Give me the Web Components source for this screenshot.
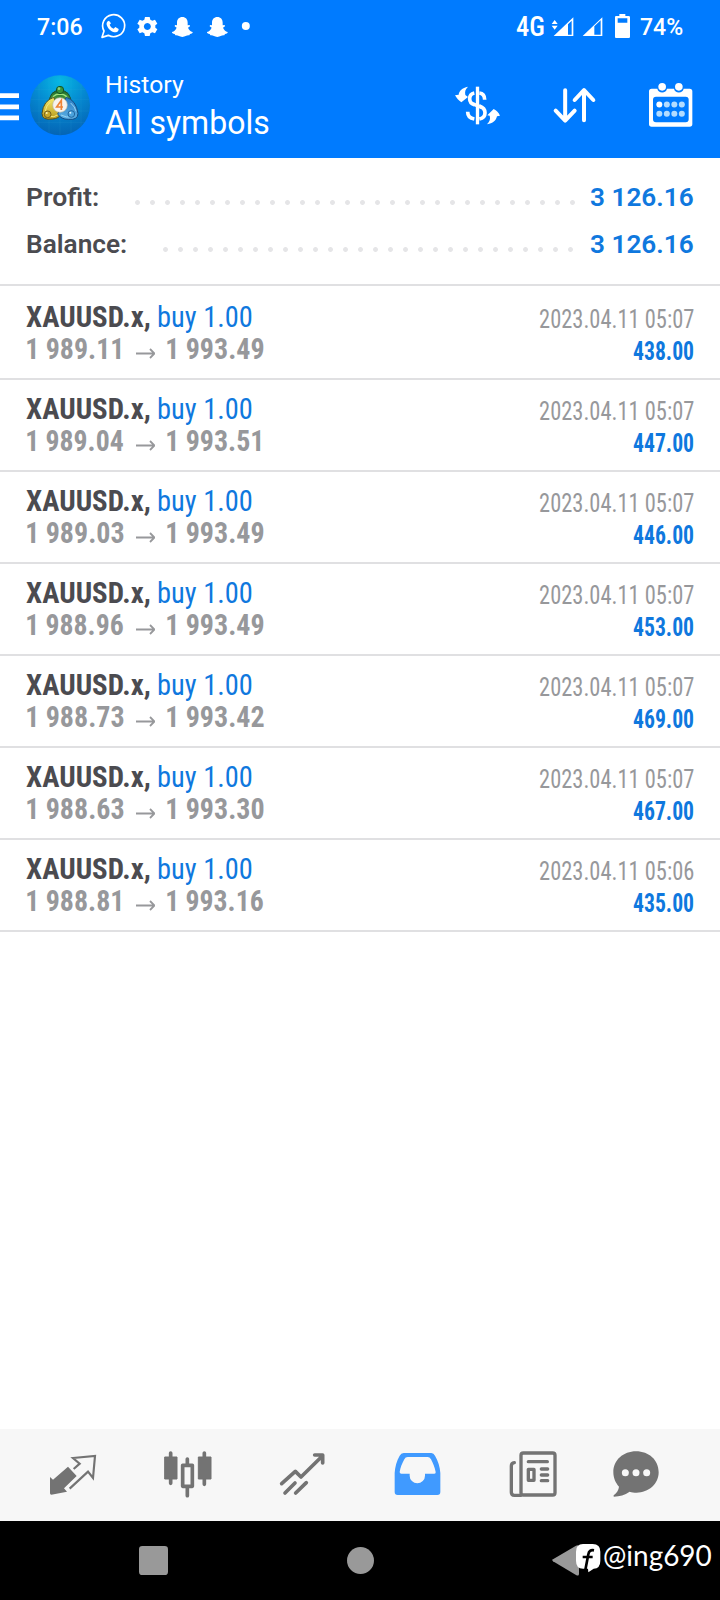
<!DOCTYPE html>
<html lang="en">
<head>
<meta charset="utf-8">
<title>History</title>
<style>
body { margin: 0; background: #fff; font-family: Roboto, "Liberation Sans", sans-serif; }
</style>
</head>
<body>
<history-app></history-app>
<script>
const define = (name, html, init) => {
  const tpl = document.createElement('template');
  tpl.innerHTML = html;
  customElements.define(name, class extends HTMLElement {
    connectedCallback() {
      if (this.shadowRoot) return;
      this.attachShadow({ mode: 'open' }).append(tpl.content.cloneNode(true));
      if (init) init.call(this, this.shadowRoot);
    }
  });
};

/* A run of text whose visible glyphs fill exactly `w` pixels. */
const ctx = document.createElement('canvas').getContext('2d');
define('fit-text', `
<style>
:host { display: block; white-space: nowrap; flex: none; }
span { display: block; width: max-content; transform-origin: 0 50%; line-height: inherit; }
</style><span></span>`, function (root) {
  const span = root.querySelector('span');
  const w = +this.getAttribute('w');
  span.textContent = this.getAttribute('text');
  const cs = getComputedStyle(this);
  ctx.font = cs.fontWeight + ' ' + cs.fontSize + ' ' + cs.fontFamily;
  ctx.fontStretch = parseFloat(cs.fontStretch) < 100 ? 'condensed' : 'normal';
  const m = ctx.measureText(span.textContent);
  const k = w / (m.actualBoundingBoxRight + m.actualBoundingBoxLeft);
  this.style.width = w + 'px';
  span.style.transform = 'translateX(' + m.actualBoundingBoxLeft * k + 'px) scaleX(' + k + ')';
});

define('status-bar', `
<style>
:host { display: flex; height: 54px; line-height: 54px; color: #fff; font-size: 24px; font-weight: 500; padding: 0 38px 0 36.500px; }
svg { display: block; height: 54px; flex: none; }
.net { font-size: 28px; font-stretch: 75%; font-weight: 500; margin-right: 1px; }
.left { margin-left: 8.500px; margin-right: auto; }
</style>
<fit-text w="45" text="7:06"></fit-text>
<svg class="left" width="165" viewBox="270 0 495 162" fill="#fff">
  <path d="M306 112l6-19a33 33 0 1 1 13 13z" fill="none" stroke="#fff" stroke-width="5" stroke-linejoin="round"/>
  <path d="M327 62c-6 1-8 7-7 12 4 13 14 22 27 23 6 0 9-5 9-10l-10-6-5 5c-6-2-10-7-12-12l4-4z"/>
  <path fill-rule="evenodd" d="M435 51h14l2 8 6 3 8-3 7 12-6 5v7l6 5-7 12-8-3-6 3-2 8h-14l-2-8-6-3-8 3-7-12 6-5v-7l-6-5 7-12 8 3 6-3zM442 69a10.500 10.500 0 1 0 .1 0z"/>
  <g id="g"><path id="ghost" d="M547 51c10 0 16 7 16 17v8l6-1 1 4-6 4c3 7 7 11 14 13 1 4-3 5-8 6l-2 4c-9-1-11 4-21 5-10-1-12-6-21-5l-2-4c-5-1-9-2-8-6 7-2 11-6 14-13l-6-4 1-4 6 1v-8c0-10 6-17 16-17z"/></g>
  <use href="#ghost" x="105"/>
  <circle cx="737.500" cy="78" r="12"/>
</svg>
<fit-text class="net" w="27.500" text="4G"></fit-text>
<svg width="95" viewBox="312 0 285 162" fill="#fff">
  <path d="M341 60l9 12h-18zM341 89l9-12h-18z"/>
  <path fill-rule="evenodd" d="M338 108l59-56v56zM381 73v31h11v-42z"/>
  <path fill-rule="evenodd" d="M425 108l59-56v56zM460 79v25h19v-43z"/>
  <path fill-rule="evenodd" d="M535 42h18v6h10q4 0 4 4v59q0 3-4 3h-38q-3 0-3-3v-59q0-4 3-4h10zM530 55v13h29v-13z"/>
</svg>
<fit-text w="42.500" text="74%"></fit-text>`);

define('app-header', `
<style>
:host { display: flex; height: 104px; color: #fff; }
svg { display: block; height: 104px; flex: none; }
.titles { width: 340px; flex: none; padding: 16px 0 0 6px; box-sizing: border-box; }
.small { font-size: 24.5px; line-height: 30px; margin-left: .5px; }
.big { font-size: 33.5px; line-height: 45px; margin-left: -1px; }
</style>
<svg width="100" viewBox="0 162 300 312" fill="none">
  <defs>
    <radialGradient id="bg" cx=".5" cy=".1" r=".9"><stop offset="0" stop-color="#06b8e4"/><stop offset=".5" stop-color="#0588d0"/><stop offset="1" stop-color="#0464b4"/></radialGradient>
    <linearGradient id="gr" x1="0" y1="0" x2="0" y2="1"><stop offset="0" stop-color="#1d6b2b"/><stop offset="1" stop-color="#70c04c"/></linearGradient>
    <linearGradient id="ye" x1="0" y1="0" x2="0" y2="1"><stop offset="0" stop-color="#f6ea6a"/><stop offset="1" stop-color="#b99a1c"/></linearGradient>
    <linearGradient id="bl" x1="0" y1="0" x2="0" y2="1"><stop offset="0" stop-color="#2a7cc4"/><stop offset="1" stop-color="#5cb0e4"/></linearGradient>
  </defs>
  <path d="M0 287h57M0 320.500h57M0 353.500h57" stroke="#fff" stroke-width="14"/>
  <circle cx="180" cy="316" r="90" fill="url(#bg)"/>
  <path d="M117 251v130M147 233v166M180 226v180M213 233v166M243 251v130M104 268h152M93 298h174M93 333h174M104 367h152" stroke="#48b6e4" stroke-opacity=".22" stroke-width="1.500"/>
  <path d="M147 313q0-42 33-42t34 42l-16 9h-36z" fill="url(#gr)" stroke="#1b5130" stroke-width="3"/>
  <path d="M156 305q-1-23 24-23 24 1 24 23" stroke="#9ce27d" stroke-width="4"/>
  <path d="M161 292q-31 10-35 48 0 22 31 17 20-1 26-15z" fill="url(#ye)" stroke="#55511c" stroke-width="3"/>
  <path d="M151 306q-13 11-15 27m10 16q16 5 30-6" stroke="#f2e67c" stroke-width="3"/>
  <path d="M199 292q29 8 35 48 0 21-29 18-22 0-32-16z" fill="url(#bl)" stroke="#154c83" stroke-width="3"/>
  <path d="M212 309q14 12 16 25m-45 11q16 9 33 5" stroke="#98d3f2" stroke-width="3"/>
  <circle cx="180" cy="270" r="11" fill="#38943d" stroke="#155526" stroke-width="3"/>
  <circle cx="143" cy="343" r="10" fill="#c9aa2a" stroke="#63501a" stroke-width="2.500"/>
  <circle cx="214" cy="342" r="10" fill="#4ba3dd" stroke="#1c5a91" stroke-width="2.500"/>
  <circle cx="177" cy="266" r="4" fill="#8ed27a"/>
  <circle cx="140" cy="339" r="3" fill="#fff3b0"/><circle cx="211" cy="338" r="3" fill="#d8f1ff"/>
  <circle cx="180" cy="315" r="22" fill="#f7f3ee" stroke="#b7b9a6" stroke-width="2"/>
  <path d="M184 330v-29l-14 20h19" stroke="#ee8336" stroke-width="5"/>
</svg>
<div class="titles">
  <fit-text class="small" w="77" text="History"></fit-text>
  <fit-text class="big" w="163.500" text="All symbols"></fit-text>
</div>
<svg width="80" viewBox="0 162 240 312" fill="none">
  <path d="M112.500 260v113" stroke="#fff" stroke-width="10"/>
  <path d="M134 299c0-12-7-19-16-20M103 279c-10 2-14 9-14 17 0 11 5 15 14 18M118 318c11 4 17 10 17 20 0 11-7 17-17 19M83 335c0 13 8 20 20 22" stroke="#fff" stroke-width="11"/>
  <path d="M100 307l24 9v11l-24-9z" fill="#fff"/>
  <path d="M45 286l11-2c2-12 10-20 28-24-8 8-10 14-8 25l8 6-20 16c-8-5-14-12-19-21zM180 347l-9 2c-3 13-12 21-30 24 8-9 11-15 8-26l-7-1 19-19c9 5 15 11 19 20z" fill="#fff"/>
</svg>
<svg width="90" viewBox="240 162 270 312" fill="none" stroke="#fff" stroke-width="12" stroke-linecap="round" stroke-linejoin="round">
  <path d="M375.500 271v90M347 332l28.500 30 28.500-30M432 361v-90M404 300l28-30 28 30"/>
</svg>
<svg width="110" viewBox="510 162 330 312" fill="#fff">
  <path fill-rule="evenodd" d="M635 266h17a15 15 0 0 0 29 0h21a15 15 0 0 0 29 0h18q8 0 8 8v99q0 7-8 7h-114q-8 0-8-7v-99q0-8 8-8zM648 290q-9 0-9 9v59q0 9 9 9h89q9 0 9-9v-59q0-9-9-9z"/>
  <circle cx="666.500" cy="260.500" r="11.500"/><circle cx="716.500" cy="260.500" r="11.500"/>
  <circle cx="658" cy="313.500" r="9"/>
  <g fill="#b3dcff"><circle cx="680.500" cy="313.500" r="9"/><circle cx="703" cy="313.500" r="9"/><circle cx="725.500" cy="313.500" r="9"/><circle cx="658" cy="341.500" r="9"/><circle cx="680.500" cy="341.500" r="9"/><circle cx="703" cy="341.500" r="9"/><circle cx="725.500" cy="341.500" r="9"/></g>
</svg>`);

define('summary-row', `
<style>
:host { display: flex; height: 47px; line-height: 47px; font-size: 26.5px; font-weight: 600; color: #4b4b50; justify-content: space-between; }
.dots { height: 5px; margin: 27px 15px 0 auto; background: radial-gradient(circle at 2.5px 2.5px, #e5e5e7 2px, transparent 2.9px) 0 0 / 15px 5px; }
.val { color: #0f78de; }
</style>`, function (root) {
  const d = this.dataset;
  root.innerHTML += `<fit-text w="${d.w}" text="${d.label}"></fit-text>
  <div class="dots" style="width:${d.dots * 15 - 10}px;margin-right:${d.gap}px"></div>
  <fit-text class="val" w="103.5" text="${d.value}"></fit-text>`;
});

define('deal-row', `
<style>
:host { display: flex; justify-content: space-between; box-sizing: border-box; height: 92px; border-bottom: 2px solid #e0e0e2; padding: 13px 26.500px 0 26px; font-stretch: 75%; font-weight: 700; }
.left { font-size: 30px; line-height: 32px; color: #97989b; }
.line { display: flex; height: 32px; }
.sym { color: #4b4b50; }
.buy { color: #0f78de; font-weight: 400; margin-left: 8px; }
.open { width: 110px; padding-left: 1px; box-sizing: border-box; }
svg { display: block; width: 19px; height: 32px; margin-right: 12px; }
.right { font-size: 25px; line-height: 32px; padding-top: 3px; display: flex; flex-direction: column; align-items: flex-end; }
.date { font-weight: 400; color: #97989b; }
.sum { color: #0f78de; }
</style>`, function (root) {
  const [open, close, date, sum] = this.dataset.deal.split('|');
  root.innerHTML += `<div class="left">
    <div class="line"><fit-text class="sym" w="123.5" text="XAUUSD.x,"></fit-text><fit-text class="buy" w="94" text="buy 1.00"></fit-text></div>
    <div class="line"><div class="open"><fit-text w="${open.endsWith('1') ? 93.5 : 96.5}" text="${open}"></fit-text></div>
      <svg viewBox="0 0 19 32" fill="none" stroke="#97989b" stroke-width="1.8"><path d="M0 20.500h18M14 16l4.500 4.500-4.500 4.500"/></svg>
      <fit-text w="${close.endsWith('1') ? 93.5 : 96.5}" text="${close}"></fit-text></div>
  </div>
  <div class="right"><fit-text class="date" w="154" text="${date}"></fit-text><fit-text class="sum" w="60.5" text="${sum}"></fit-text></div>`;
});

define('tab-bar', `
<style>
:host { display: flex; height: 92px; background: #f7f7f7; color: #737373; }
svg { display: block; height: 92px; flex: none; }
</style>
<svg width="130" viewBox="0 27 390 276" fill="none">
  <path d="M150 171l9 8 45-39 26 28-38 37 9 10-47 9q-4 0-4-4z" fill="#737373"/>
  <path d="M221 147l18-16-20-17 66-6-6 66-15-19-55 51" stroke="#737373" stroke-width="6.500"/>
</svg>
<svg width="115" viewBox="390 27 345 276" fill="none" stroke="#737373">
  <path d="M512 99v91M613 99v94M562 117v16M562 204v23" stroke-width="11" stroke-linecap="round"/>
  <path d="M494 111h37v66h-37zM595 111h38v66h-38z" fill="#737373" stroke="#737373" stroke-width="3" stroke-linejoin="round"/>
  <rect x="548" y="136" width="29" height="63" stroke-width="11" stroke-linejoin="round"/>
</svg>
<svg width="115" viewBox="15 27 345 276" fill="none" stroke="#737373" stroke-width="11" stroke-linecap="round" stroke-linejoin="round">
  <path d="M125 191l41-37 17 17 61-60M224 105h24v24M165 189l-30 30M199 188l-32 31"/>
</svg>
<svg width="115" viewBox="360 27 345 276">
  <path fill="#409aff" fill-rule="evenodd" d="M491 99h83q7 0 11 8c9 16 15 33 16 52v57q0 9-9 9h-119q-9 0-9-9v-57c1-19 6-36 15-52q4-8 12-8zM503 111q-7 0-10 7c-7 13-12 25-14 38q0 5 5 5h25v6a23 23 0 0 0 46 0v-6h28q5 0 4-5c-3-14-7-25-14-38q-4-7-10-7z"/>
</svg>
<svg width="110" viewBox="-15 27 330 276" fill="none" stroke="#737373" stroke-width="10" stroke-linecap="round" stroke-linejoin="round">
  <path d="M123 226h-20q-9 0-9-9v-79q0-9 9-10"/>
  <rect x="123" y="99" width="102" height="126" rx="7"/>
  <path d="M145 125h57M184 147h19M184 165h19M184 182h19"/>
  <path d="M145 148h17v33h-17z"/>
</svg>
<svg width="135" viewBox="315 27 405 276">
  <path fill="#737373" d="M468 94c39 0 68 26 68 63 0 36-31 61-66 61-9 0-14-1-21-3-15 11-30 14-47 15-2-1-2-3 0-5 9-7 14-16 15-25-10-11-17-26-17-43 0-37 30-63 68-63z"/>
  <circle cx="436" cy="158" r="10.500" fill="#f7f7f7"/><circle cx="468" cy="158" r="10.500" fill="#f7f7f7"/><circle cx="500" cy="158" r="10.500" fill="#f7f7f7"/>
</svg>`);

define('system-nav', `
<style>
:host { display: flex; height: 79px; background: #000; color: #fff; font: 400 28px/69px Lato, sans-serif; }
svg { display: block; height: 79px; flex: none; }
</style>
<svg width="604" viewBox="0 303 1812 237">
  <rect x="417" y="378" width="87" height="87" rx="10" fill="#999"/>
  <circle cx="1081.500" cy="421.500" r="40.500" fill="#999"/>
  <path d="M1659 418l69-41q9-4 9 5v79q0 9-9 4l-69-41q-5-3 0-6z" fill="#999"/>
  <path d="M1749 372h29q23 0 23 23v27q0 23-20 24l-16 11-1-11h-15q-21 0-21-24v-27q0-23 21-23z" fill="#fff"/>
  <path d="M1782 391q-15-3-17 12l-9 47M1748 411h30" fill="none" stroke="#000" stroke-width="8"/>
</svg>
<fit-text w="107.500" text="@ing690"></fit-text>`);

define('history-app', `
<style>
:host { display: flex; flex-direction: column; width: 720px; height: 1600px; background: #fff; overflow: hidden; }
.top { background: #007bff; flex: none; }
.summary { flex: none; height: 126px; box-sizing: border-box; padding: 15px 26.500px 0 27px; }
.list { flex: 1; border-top: 2px solid #e0e0e2; padding-top: 2px; }
</style>
<div class="top"><status-bar></status-bar><app-header></app-header></div>
<div class="summary">
  <summary-row data-label="Profit:" data-w="71" data-dots="30" data-gap="15" data-value="3 126.16"></summary-row>
  <summary-row data-label="Balance:" data-w="99" data-dots="28" data-gap="17" data-value="3 126.16"></summary-row>
</div>
<div class="list">
  <deal-row data-deal="1 989.11|1 993.49|2023.04.11 05:07|438.00"></deal-row>
  <deal-row data-deal="1 989.04|1 993.51|2023.04.11 05:07|447.00"></deal-row>
  <deal-row data-deal="1 989.03|1 993.49|2023.04.11 05:07|446.00"></deal-row>
  <deal-row data-deal="1 988.96|1 993.49|2023.04.11 05:07|453.00"></deal-row>
  <deal-row data-deal="1 988.73|1 993.42|2023.04.11 05:07|469.00"></deal-row>
  <deal-row data-deal="1 988.63|1 993.30|2023.04.11 05:07|467.00"></deal-row>
  <deal-row data-deal="1 988.81|1 993.16|2023.04.11 05:06|435.00"></deal-row>
</div>
<tab-bar></tab-bar>
<system-nav></system-nav>`);
</script>
</body>
</html>
